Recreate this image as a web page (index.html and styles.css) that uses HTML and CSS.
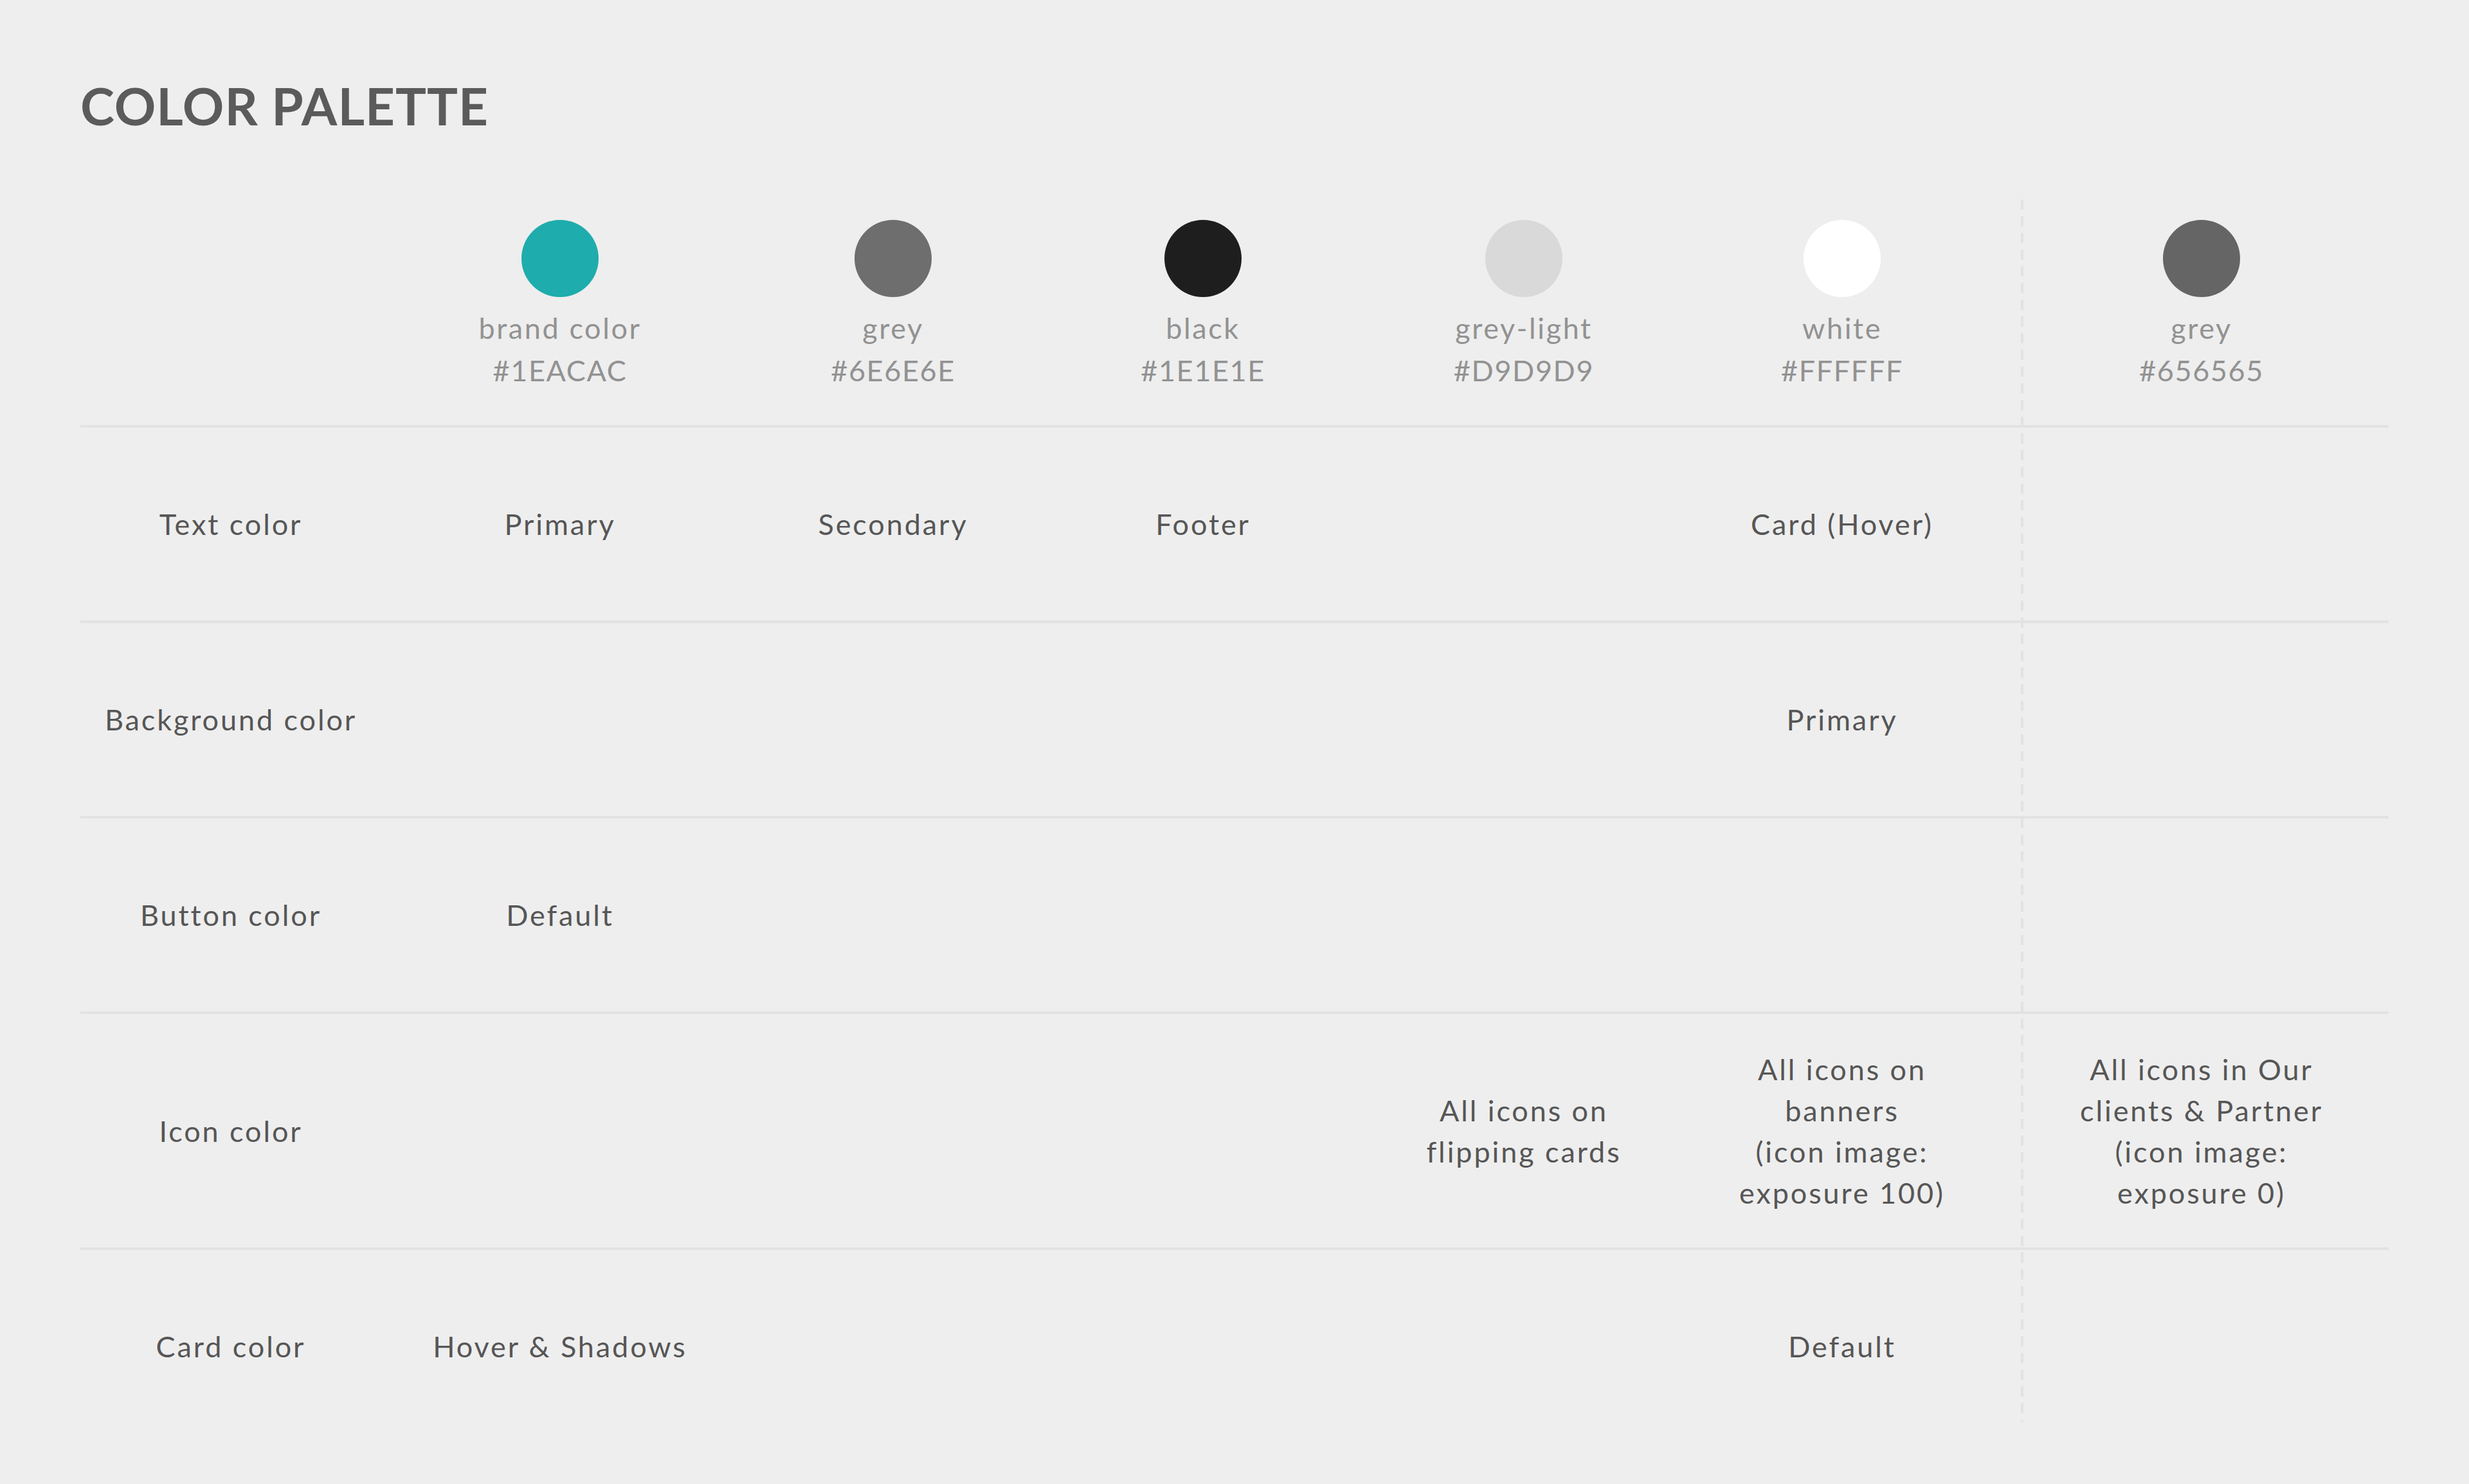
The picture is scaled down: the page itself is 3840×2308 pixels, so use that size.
FILE: index.html
```html
<!DOCTYPE html>
<html lang="en">
<head>
<meta charset="utf-8">
<title>Color Palette</title>
<link rel="stylesheet" href="styles.css">
</head>
<body>
<main class="page">
  <h1 class="title">COLOR PALETTE</h1>
  <section class="table">
    <div class="row head">
      <div class="cell"></div>
      <div class="cell swatch"><span class="dot dot-brand"></span><span class="name">brand color</span><span class="hex">#1EACAC</span></div>
      <div class="cell swatch"><span class="dot dot-grey"></span><span class="name">grey</span><span class="hex">#6E6E6E</span></div>
      <div class="cell swatch"><span class="dot dot-black"></span><span class="name">black</span><span class="hex">#1E1E1E</span></div>
      <div class="cell swatch"><span class="dot dot-light"></span><span class="name">grey-light</span><span class="hex">#D9D9D9</span></div>
      <div class="cell swatch c5"><span class="dot dot-white"></span><span class="name">white</span><span class="hex">#FFFFFF</span></div>
      <div class="cell swatch c6"><span class="dot dot-grey2"></span><span class="name">grey</span><span class="hex">#656565</span></div>
    </div>
    <div class="row body">
      <div class="cell">Text color</div>
      <div class="cell">Primary</div>
      <div class="cell">Secondary</div>
      <div class="cell">Footer</div>
      <div class="cell"></div>
      <div class="cell c5">Card (Hover)</div>
      <div class="cell c6"></div>
    </div>
    <div class="row body">
      <div class="cell">Background color</div>
      <div class="cell"></div>
      <div class="cell"></div>
      <div class="cell"></div>
      <div class="cell"></div>
      <div class="cell c5">Primary</div>
      <div class="cell c6"></div>
    </div>
    <div class="row body">
      <div class="cell">Button color</div>
      <div class="cell">Default</div>
      <div class="cell"></div>
      <div class="cell"></div>
      <div class="cell"></div>
      <div class="cell c5"></div>
      <div class="cell c6"></div>
    </div>
    <div class="row body tall">
      <div class="cell">Icon color</div>
      <div class="cell"></div>
      <div class="cell"></div>
      <div class="cell"></div>
      <div class="cell">All icons on<br>flipping cards</div>
      <div class="cell c5">All icons on<br>banners<br>(icon image:<br>exposure 100)</div>
      <div class="cell c6">All icons in Our<br>clients &amp; Partner<br>(icon image:<br>exposure 0)</div>
    </div>
    <div class="row body last">
      <div class="cell">Card color</div>
      <div class="cell">Hover &amp; Shadows</div>
      <div class="cell"></div>
      <div class="cell"></div>
      <div class="cell"></div>
      <div class="cell c5">Default</div>
      <div class="cell c6"></div>
    </div>
  </section>
</main>
</body>
</html>
```
FILE: styles.css
```css
html, body {
  margin: 0;
  padding: 0;
  background: #eeeeee;
}

body {
  font-family: Lato, "Open Sans", sans-serif;
}

.page {
  padding: 124px 125px 0 125px;
}

.title {
  margin: 0 0 106px 0;
  font-size: 80px;
  line-height: 80px;
  font-weight: 700;
  color: #5b5b5b;
  letter-spacing: 1px;
}

.table {
  position: relative;
  width: 3590px;
}

.table::after {
  content: "";
  position: absolute;
  left: 3018px;
  top: 0;
  width: 4px;
  height: 1902px;
  background: repeating-linear-gradient(to bottom, #e2e2e2 0 16px, transparent 16px 26px);
  border-radius: 2px;
}

.row {
  display: grid;
  grid-template-columns: 468px 556px 480px 484px 514px 516px 572px;
  border-bottom: 4px solid #e2e2e2;
}

.row.last {
  border-bottom: none;
}

.cell {
  display: flex;
  flex-direction: column;
  align-items: center;
  text-align: center;
}

.cell.c5 {
  padding-right: 40px;
}

.cell.c6 {
  padding-right: 10px;
}

.head {
  height: 351px;
}

.head .cell {
  padding-top: 32px;
}

.dot {
  display: block;
  width: 120px;
  height: 120px;
  border-radius: 50%;
  margin-bottom: 15px;
}

.dot-brand { background: #1eacac; }
.dot-grey { background: #6e6e6e; }
.dot-black { background: #1e1e1e; }
.dot-light { background: #d9d9d9; }
.dot-white { background: #ffffff; }
.dot-grey2 { background: #656565; }

.name, .hex {
  display: block;
  font-size: 45px;
  line-height: 66px;
  color: #929292;
  letter-spacing: 2.6px;
}

.hex {
  letter-spacing: 1.6px;
}

.body {
  height: 300px;
}

.body .cell {
  justify-content: center;
  font-size: 45px;
  line-height: 64px;
  color: #565656;
  letter-spacing: 2.9px;
}

.body.tall {
  height: 363px;
}
```
